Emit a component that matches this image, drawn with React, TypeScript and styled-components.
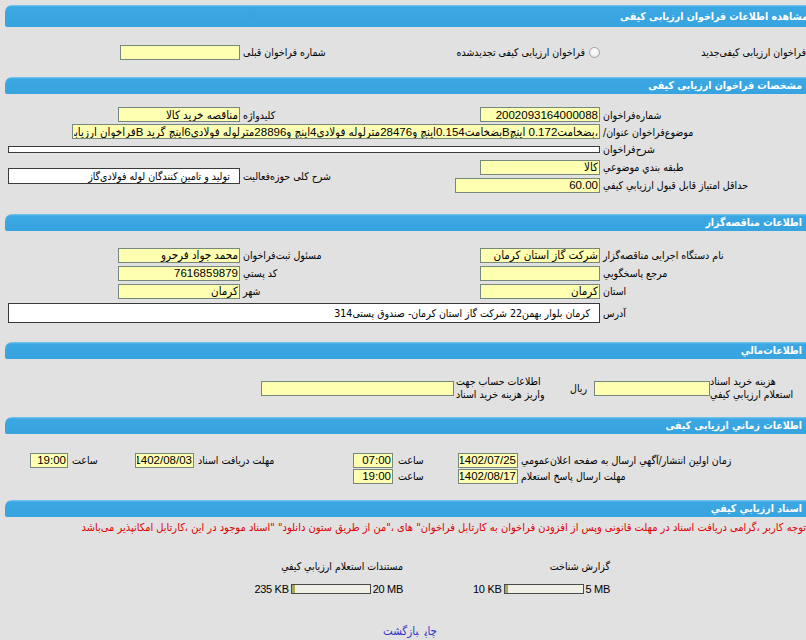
import React from 'react'
import styled, { createGlobalStyle } from 'styled-components'

const FONT = '"DejaVu Sans Condensed", "DejaVu Sans", sans-serif'
const FIELD_FONT = '"Liberation Sans", "DejaVu Sans Condensed", "DejaVu Sans", sans-serif'

const GlobalStyle = createGlobalStyle`
  html, body {
    margin: 0;
    padding: 0;
    background: #e1e1e1;
  }
  body {
    width: 806px;
    height: 640px;
    overflow: hidden;
    font-family: ${FONT};
    font-size: 10.5px;
    color: #000;
  }
`

const Page = styled.div`
  width: 807px;
  margin-left: 5px;
  padding-top: 5px;
  direction: rtl;
`

const SectionBar = styled.div<{ $big?: boolean; $inset?: number }>`
  box-sizing: border-box;
  height: ${p => (p.$big ? 22 : 17)}px;
  padding-right: ${p => p.$inset ?? 10}px;
  border-radius: 7px 0 0 2px;
  background: linear-gradient(to bottom, #7ec8f0 0, #3ca8e3 2px, #37a3df 100%);
  color: #fff;
  font-weight: bold;
  font-size: 10.5px;
  line-height: ${p => (p.$big ? 22 : 17)}px;
  white-space: nowrap;
  overflow: hidden;
`

const Body = styled.div<{ $top: number; $bottom: number }>`
  padding: ${p => p.$top}px 0 ${p => p.$bottom}px 3px;
`

const FormGrid = styled.div<{ $rows?: string }>`
  display: grid;
  grid-template-columns: 212px 145px 215px 232px;
  grid-auto-rows: 18px;
  ${p => (p.$rows ? `grid-template-rows: ${p.$rows};` : '')}
`

const Label = styled.div<{ $rowSpan?: number; $pad?: number }>`
  display: flex;
  align-items: center;
  justify-content: flex-end;
  padding-left: ${p => p.$pad ?? 3}px;
  white-space: nowrap;
  ${p => (p.$rowSpan ? `grid-row: span ${p.$rowSpan};` : '')}
`

const Value = styled.div<{ $span?: number; $rowSpan?: number; $inset?: number }>`
  display: flex;
  align-items: center;
  padding-right: ${p => p.$inset ?? 0}px;
  grid-column: span ${p => p.$span ?? 1};
  ${p => (p.$rowSpan ? `grid-row: span ${p.$rowSpan};` : '')}
`

const Field = styled.input.attrs({ type: 'text', readOnly: true })<{ $w: number }>`
  box-sizing: border-box;
  width: ${p => p.$w}px;
  height: 15px;
  margin: 0;
  padding: 0 1px;
  border: 1px solid #76887a;
  background: #ffffb2;
  font-family: ${FIELD_FONT};
  font-size: 11.5px;
  color: #000;
  direction: rtl;
  outline: none;
`

const Box = styled.div<{ $h: number }>`
  box-sizing: border-box;
  width: 100%;
  height: ${p => p.$h}px;
  border: 1px solid #3a3a3a;
  background: #fff;
  padding-right: 9px;
  line-height: ${p => Math.max(p.$h - 2, 0)}px;
  white-space: nowrap;
  overflow: hidden;
`

const Option = styled.label`
  display: flex;
  align-items: center;
  white-space: nowrap;
`

const Radio = styled.span<{ $edge?: number }>`
  flex: none;
  box-sizing: border-box;
  width: 11px;
  height: 11px;
  margin-right: ${p => p.$edge ?? 0}px;
  margin-left: 4px;
  border: 1px solid #a3a3a3;
  border-radius: 50%;
  background: radial-gradient(circle at 50% 40%, #ffffff 0, #f2f2f2 50%, #d6d6d6 100%);
`

const MoneyRow = styled.div`
  display: flex;
  align-items: center;
  height: 28px;
`

const Cell = styled.div<{ $w: number; $toInput?: boolean; $pad?: number }>`
  flex: none;
  width: ${p => p.$w}px;
  box-sizing: border-box;
  text-align: ${p => (p.$toInput ? 'left' : 'right')};
  padding: 0 ${p => (p.$toInput ? 0 : p.$pad ?? 0)}px 0 0;
  line-height: 13px;
  white-space: nowrap;
`

const TimeGrid = styled.div`
  display: grid;
  grid-template-columns: 292px 64px 60px 43px 157px 62px 64px 40px 22px;
  grid-auto-rows: 16px;
`

const Notice = styled.div`
  height: 16px;
  line-height: 16px;
  padding-right: 6px;
  color: #e00000;
  font-size: 11px;
  white-space: nowrap;
`

const DocsGrid = styled.div`
  display: grid;
  grid-template-columns: 202px 207px 205px 190px;
  grid-template-rows: 16px 16px;
  row-gap: 7px;
  margin-top: 22px;
`

const DocTitle = styled.div<{ $col: number }>`
  grid-column: ${p => p.$col};
  line-height: 16px;
  white-space: nowrap;
`

const Meter = styled.div<{ $col: number }>`
  grid-column: ${p => p.$col};
  display: flex;
  direction: ltr;
  justify-content: flex-end;
  align-items: center;
  gap: 2px;
  font-family: "Liberation Sans", sans-serif;
  font-size: 11px;
  letter-spacing: -0.3px;
  white-space: nowrap;
`

const Track = styled.div`
  box-sizing: border-box;
  width: 80px;
  height: 10px;
  border: 1px solid #4a4a4a;
  background: #efefe8;
`

const Fill = styled.div`
  height: 100%;
  background: #a9a95c;
`

const Links = styled.div`
  margin-top: 26px;
  height: 16px;
  line-height: 16px;
  text-align: center;
  font-size: 11.5px;
  a {
    color: #3434c8;
    text-decoration: none;
    margin: 0 3px;
  }
`

type Doc = { title: string; size: number; max: number; sizeText: string; maxText: string }

const docs: Doc[] = [
  { title: 'گزارش شناخت', size: 10, max: 5 * 1024, sizeText: '10 KB', maxText: '5 MB' },
  { title: 'مستندات  استعلام  ارزیابي کیفي', size: 235, max: 20 * 1024, sizeText: '235 KB', maxText: '20 MB' },
]

const title =
  '،بضخامت0.172 اینچBبضخامت0.154اینچ و28476مترلوله فولادی4اینچ و28896مترلوله فولادی6اینچ گرید Bفراخوان ارزیابی کیفی'

export default function App() {
  return (
    <>
      <GlobalStyle />
      <Page>
        <SectionBar $big $inset={4}>مشاهده اطلاعات فراخوان ارزیابی کیفی</SectionBar>
        <Body $top={16} $bottom={16}>
          <FormGrid>
            <Value>
              <Option>
                <Radio $edge={-9} />
                فراخوان  ارزیابی  کیفی‌جدید
              </Option>
            </Value>
            <Value>
              <Option>
                <Radio />
                فراخوان  ارزیابی  کیفی  تجدیدشده
              </Option>
            </Value>
            <Label>شماره فراخوان قبلی</Label>
            <Value>
              <Field $w={120} value="" />
            </Value>
          </FormGrid>
        </Body>

        <SectionBar>مشخصات فراخوان ارزیابی کیفی</SectionBar>
        <Body $top={12} $bottom={20}>
          <FormGrid $rows="17px 17px 18px 18px 18px">
            <Label>شماره‌فراخوان</Label>
            <Value>
              <Field $w={120} value="2002093164000088" />
            </Value>
            <Label>کلیدواژه</Label>
            <Value>
              <Field $w={122} value="مناقصه خرید کالا" />
            </Value>

            <Label>موضوع‌فراخوان  عنوان/</Label>
            <Value $span={3}>
              <Field $w={528} value={title} />
            </Value>

            <Label>شرح‌فراخوان</Label>
            <Value $span={3}>
              <Box $h={7} />
            </Value>

            <Label>طبقه بندي موضوعي</Label>
            <Value>
              <Field $w={120} value="کالا" />
            </Value>
            <Label $rowSpan={2}>شرح کلی حوزه‌فعالیت</Label>
            <Value $rowSpan={2}>
              <Box $h={16}>تولید و تامین  کنندگان لوله فولادی‌گاز</Box>
            </Value>

            <Label>حداقل امتیاز قابل قبول  ارزیابي کیفي</Label>
            <Value>
              <Field $w={145} value="60.00" />
            </Value>
          </FormGrid>
        </Body>

        <SectionBar>اطلاعات مناقصه‌گزار</SectionBar>
        <Body $top={15} $bottom={16}>
          <FormGrid $rows="18px 18px 18px 26px">
            <Label>نام دستگاه اجرایی  مناقصه‌گزار</Label>
            <Value>
              <Field $w={120} value="شرکت گاز استان کرمان" />
            </Value>
            <Label>مسئول ثبت‌فراخوان</Label>
            <Value>
              <Field $w={122} value="محمد جواد فرحرو" />
            </Value>

            <Label>مرجع پاسخگويي</Label>
            <Value>
              <Field $w={120} value="" />
            </Value>
            <Label>کد پستي</Label>
            <Value>
              <Field $w={122} value="7616859879" />
            </Value>

            <Label>استان</Label>
            <Value>
              <Field $w={120} value="کرمان" />
            </Value>
            <Label>شهر</Label>
            <Value>
              <Field $w={122} value="کرمان" />
            </Value>

            <Label>آدرس</Label>
            <Value $span={3}>
              <Box $h={20}>کرمان بلوار بهمن22 شرکت گاز استان کرمان-  صندوق  پستی314</Box>
            </Value>
          </FormGrid>
        </Body>

        <SectionBar>اطلاعات‌مالي</SectionBar>
        <Body $top={15} $bottom={15}>
          <MoneyRow>
            <Cell $w={102} $toInput>
              هزینه خرید اسناد
              <br />
              استعلام ارزیابي کیفي
            </Cell>
            <Field $w={116} value="" />
            <Cell $w={38} $pad={7}>ریال</Cell>
            <Cell $w={100} $toInput>
              اطلاعات حساب جهت
              <br />
              واریز هزینه خرید اسناد
            </Cell>
            <Field $w={193} value="" style={{ marginRight: 2 }} />
          </MoneyRow>
        </Body>

        <SectionBar>اطلاعات زماني ارزیابی کیفی</SectionBar>
        <Body $top={18} $bottom={16}>
          <TimeGrid>
            <Label $pad={1}>زمان اولین انتشار/آگهي ارسال به  صفحه اعلان‌عمومي</Label>
            <Value $inset={2}>
              <Field $w={60} value="1402/07/25" />
            </Value>
            <Label $pad={2}>ساعت</Label>
            <Value $inset={3}>
              <Field $w={40} value="07:00" />
            </Value>
            <Label $pad={2}>مهلت  دریافت اسناد</Label>
            <Value $inset={2}>
              <Field $w={59} value="1402/08/03" />
            </Value>
            <Label $pad={2}>ساعت</Label>
            <Value $inset={2}>
              <Field $w={38} value="19:00" />
            </Value>
            <div />

            <Label $pad={1}>مهلت ارسال پاسخ استعلام</Label>
            <Value $inset={2}>
              <Field $w={60} value="1402/08/17" />
            </Value>
            <Label $pad={2}>ساعت</Label>
            <Value $inset={3}>
              <Field $w={40} value="19:00" />
            </Value>
          </TimeGrid>
        </Body>

        <SectionBar>اسناد ارزیابي کیفي</SectionBar>
        <Body $top={3} $bottom={0}>
          <Notice>
            توجه کاربر ،گرامی دریافت اسناد در مهلت قانونی وپس از افزودن فراخوان به کارتابل فراخوان" های ،"من از طریق ستون دانلود" "اسناد موجود در این ،کارتابل امکانپذیر می‌باشد
          </Notice>
          <DocsGrid>
            {docs.map((d, i) => (
              <DocTitle key={`t${i}`} $col={i + 2}>
                {d.title}
              </DocTitle>
            ))}
            {docs.map((d, i) => (
              <Meter key={`m${i}`} $col={i + 2}>
                <span>{d.sizeText}</span>
                <Track>
                  <Fill style={{ width: Math.max(3, Math.round((d.size / d.max) * 78)) }} />
                </Track>
                <span>{d.maxText}</span>
              </Meter>
            ))}
          </DocsGrid>
          <Links>
            <a href="#">چاپ</a>
            <a href="#">بازگشت</a>
          </Links>
        </Body>
      </Page>
    </>
  )
}
